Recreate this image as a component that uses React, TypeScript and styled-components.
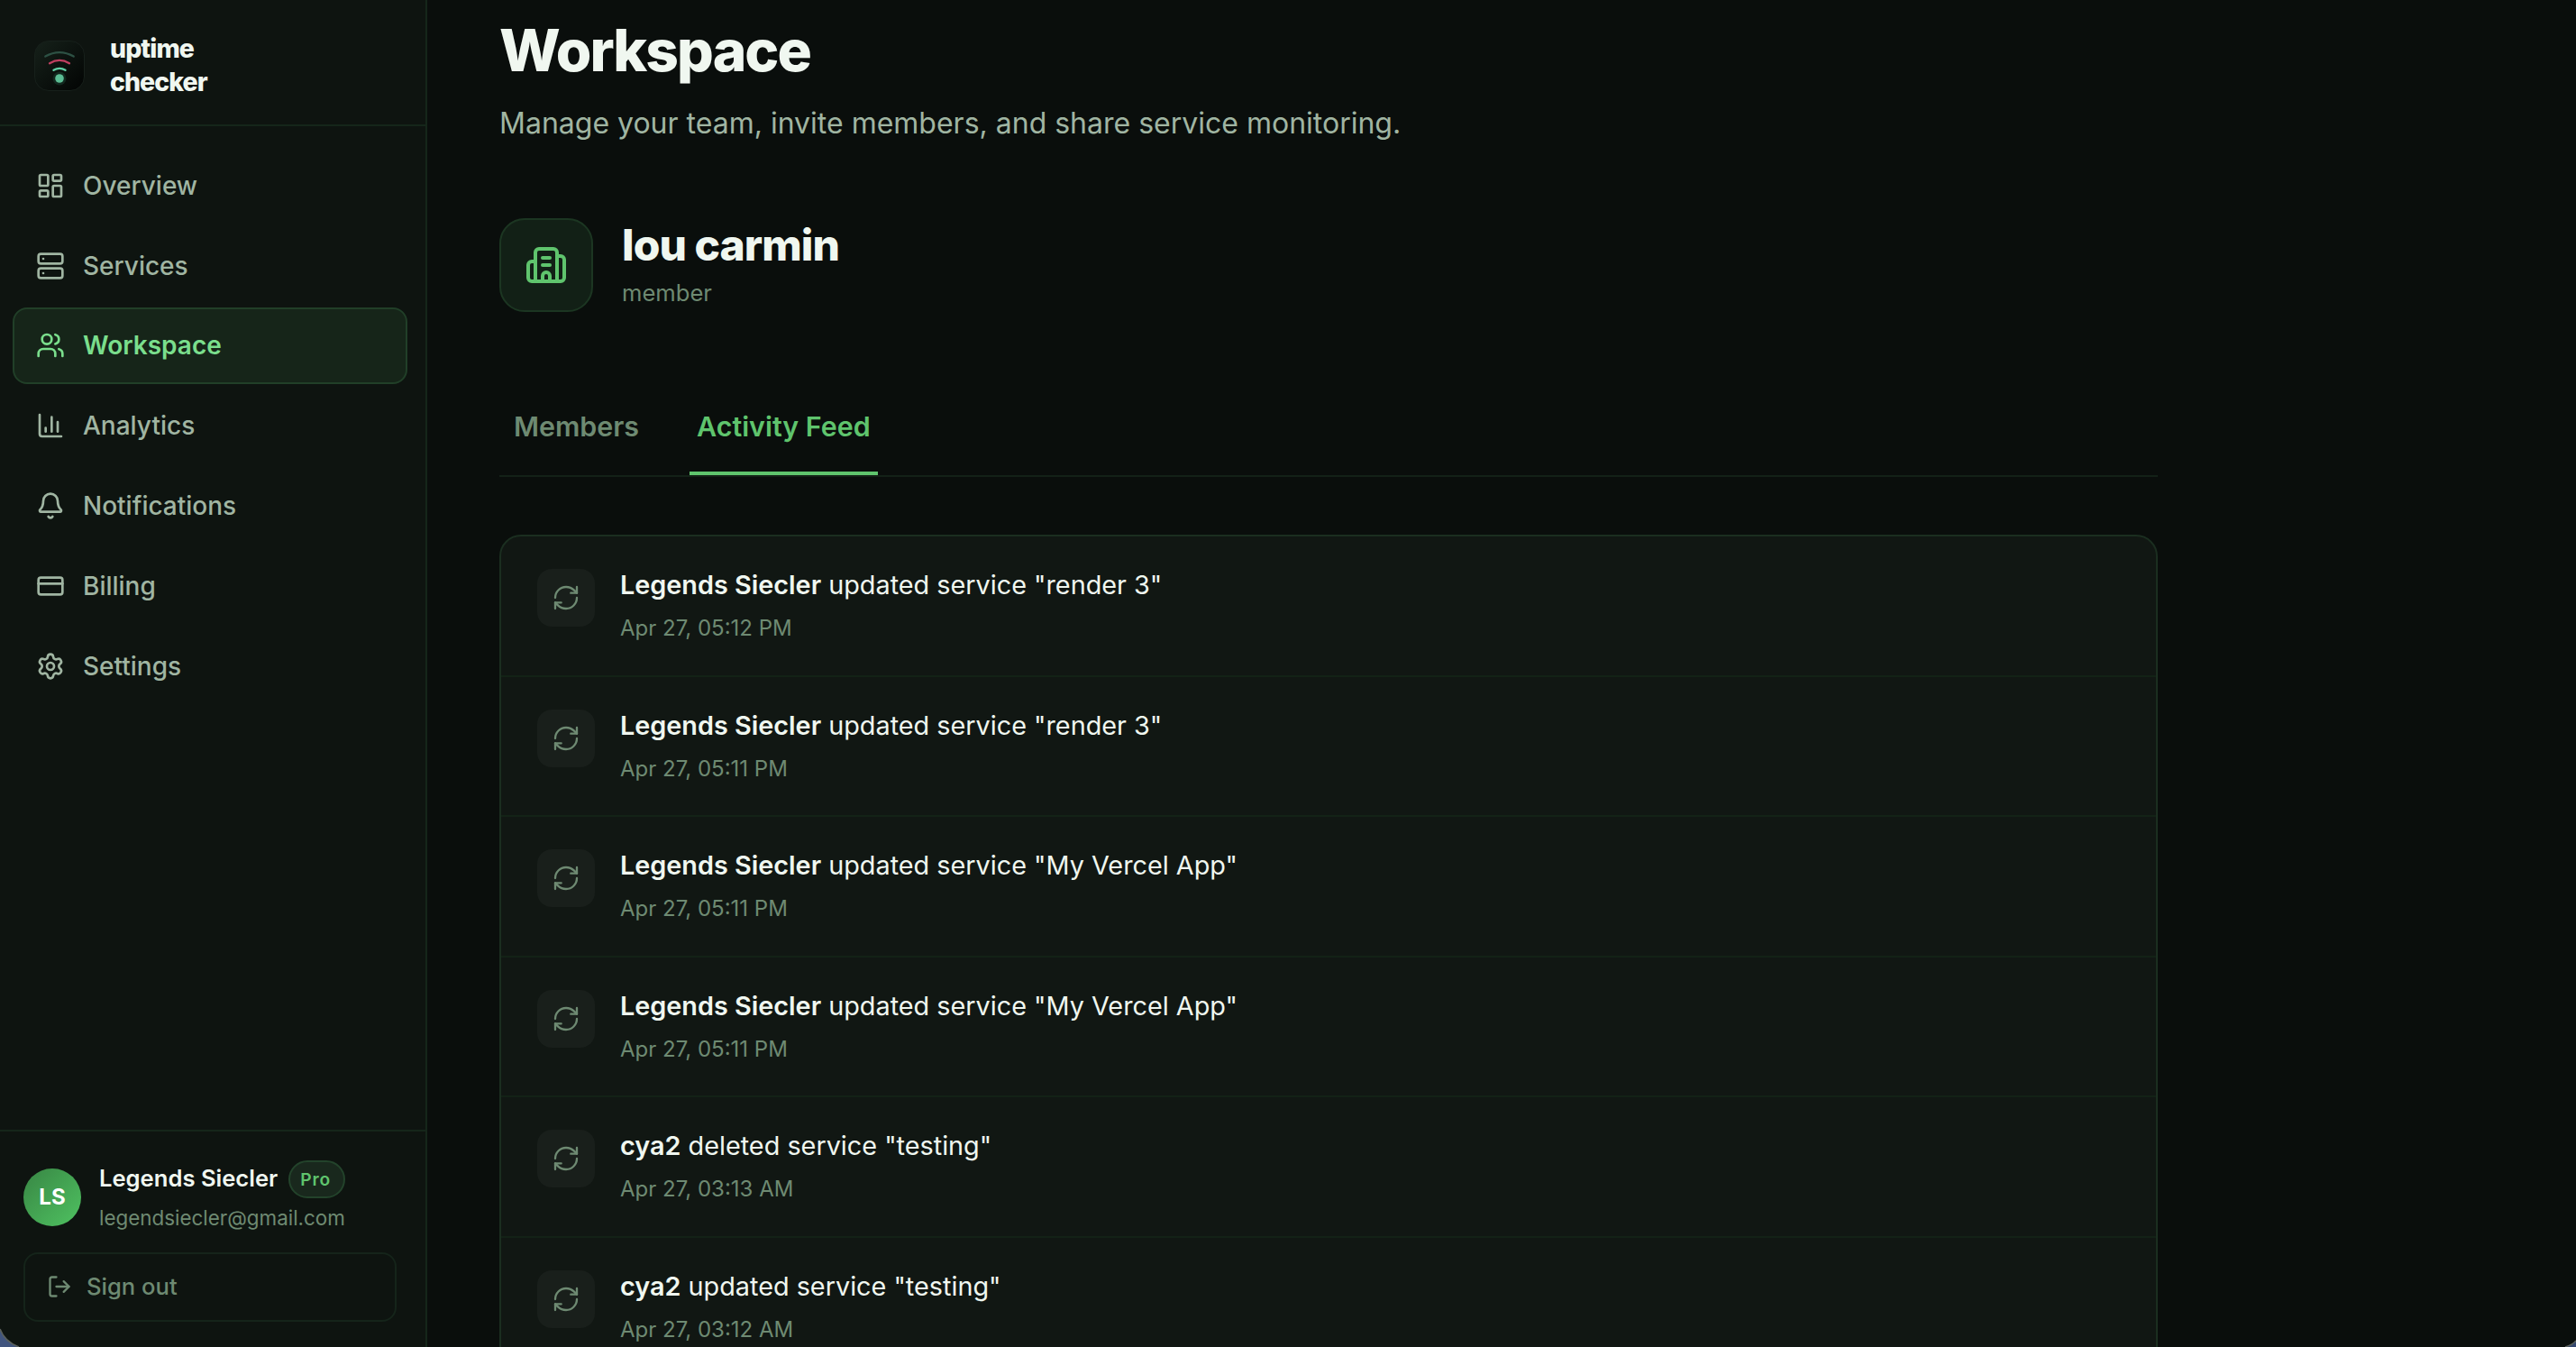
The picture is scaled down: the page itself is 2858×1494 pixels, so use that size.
import React from "react";
import styled, { createGlobalStyle, css } from "styled-components";
import {
  Bell,
  Building2,
  ChartColumn,
  CreditCard,
  LayoutDashboard,
  LogOut,
  RefreshCw,
  Server,
  Settings,
  Users,
  type LucideIcon,
} from "lucide-react";

const color = {
  page: "#0a0e0c",
  sidebar: "#0e1410",
  line: "#15261a",
  text: "#f0f7f0",
  soft: "#a0b5a2",
  muted: "#6e8a72",
  green: "#5fc46d",
  greenLight: "#7ade8c",
};

const GlobalStyle = createGlobalStyle`
  *, *::before, *::after { box-sizing: border-box; }
  html, body { margin: 0; background: ${color.page}; }
  body {
    color: ${color.text};
    font-family: Inter, "Liberation Sans", sans-serif;
    overflow: hidden;
  }
  svg { display: block; flex-shrink: 0; }
`;

const Shell = styled.div`
  position: relative;
  display: grid;
  grid-template: 100% / 474px 1fr;
  height: 1494px;
  overflow: hidden;
`;

const Sidebar = styled.aside`
  display: flex;
  flex-direction: column;
  min-height: 0;
  background: ${color.sidebar};
  border-right: 2px solid ${color.line};
`;

const Brand = styled.div`
  display: flex;
  align-items: flex-start;
  gap: 28px;
  height: 140px;
  padding: 45px 38px 0;
  border-bottom: 2px solid ${color.line};
`;

const BrandName = styled.div`
  width: 120px;
  margin-top: -10px;
  font-size: 28.4px;
  line-height: 37px;
  font-weight: 800;
  letter-spacing: -0.032em;
`;

const Nav = styled.nav`
  display: flex;
  flex: 1;
  flex-direction: column;
  gap: 4px;
  padding: 23.4px 20px 0 14px;
`;

const NavItem = styled.a<{ $active?: boolean }>`
  display: flex;
  align-items: center;
  gap: 20px;
  height: 84.8px;
  padding: 0 24px;
  border: 2px solid transparent;
  border-radius: 16px;
  color: ${color.soft};
  font-size: 28px;
  font-weight: 500;
  ${(p) =>
    p.$active &&
    css`
      color: ${color.greenLight};
      background: #162519;
      border-color: #213f28;
      font-weight: 600;
    `}
`;

const Account = styled.div`
  display: flex;
  flex-direction: column;
  gap: 21px;
  height: 241px;
  padding: 32px 32px 0 26px;
  border-top: 2px solid ${color.line};
`;

const Profile = styled.div`
  display: flex;
  align-items: center;
  gap: 20px;
  height: 81px;
`;

const Avatar = styled.div`
  display: grid;
  place-items: center;
  flex-shrink: 0;
  width: 64px;
  height: 64px;
  margin-top: 1px;
  border-radius: 50%;
  background: linear-gradient(135deg, #388644, #4fc261);
  color: #fff;
  font-size: 24px;
  font-weight: 700;
  line-height: 1;
`;

const ProfileText = styled.div`
  display: flex;
  flex-direction: column;
`;

const ProfileTop = styled.div`
  display: flex;
  align-items: center;
  gap: 11.7px;
  height: 42px;
`;

const ProfileName = styled.span`
  font-size: 25.6px;
  line-height: 38px;
  margin-top: -2px;
  font-weight: 600;
`;

const Badge = styled.span`
  display: flex;
  align-items: center;
  width: 63px;
  height: 42px;
  padding-left: 11.2px;
  border: 2px solid #23432b;
  border-radius: 21px;
  background: #19281d;
  color: ${color.green};
  font-size: 19.2px;
  font-weight: 600;
  letter-spacing: 0.045em;
`;

const Email = styled.span`
  margin-top: 5px;
  color: ${color.muted};
  font-size: 22.4px;
  line-height: 34px;
`;

const SignOut = styled.button`
  display: flex;
  align-items: center;
  gap: 16px;
  height: 77px;
  padding: 0 24px 2px;
  border: 2px solid #15241a;
  border-radius: 16px;
  background: none;
  color: ${color.muted};
  font: 500 25.6px Inter, "Liberation Sans", sans-serif;
`;

const Main = styled.main`
  width: 2000px;
  padding: 20px 80px 0;
`;

const Title = styled.h1`
  margin: 0;
  font-size: 64px;
  line-height: 71px;
  font-weight: 800;
  letter-spacing: -0.03em;
`;

const Subtitle = styled.p`
  margin: 20px 0 0;
  color: ${color.soft};
  font-size: 32px;
  line-height: 51px;
`;

const Team = styled.section`
  display: flex;
  align-items: center;
  gap: 32px;
  margin-top: 80px;
`;

const TeamIcon = styled.div`
  display: grid;
  place-items: center;
  width: 104px;
  height: 104px;
  border: 2px solid #1c3622;
  border-radius: 28px;
  background: #122016;
  color: ${color.green};
`;

const TeamName = styled.h2`
  margin: 0;
  font-size: 48px;
  line-height: 58px;
  font-weight: 800;
  letter-spacing: -0.02em;
`;

const TeamRole = styled.div`
  margin-top: 3px;
  color: ${color.muted};
  font-size: 25.6px;
  line-height: 41px;
`;

const Tabs = styled.div`
  display: flex;
  gap: 32px;
  height: 97px;
  margin-top: 86px;
  border-bottom: 2px solid #132117;
`;

const Tab = styled.div<{ $active?: boolean }>`
  position: relative;
  padding: 17px 16px 0;
  color: ${(p) => (p.$active ? color.green : color.muted)};
  font-size: 30.4px;
  line-height: 49px;
  font-weight: 600;
  ${(p) =>
    p.$active &&
    css`
      &::after {
        content: "";
        position: absolute;
        left: 8px;
        right: 8px;
        bottom: 0;
        height: 4px;
        background: ${color.green};
      }
    `}
`;

const Feed = styled.section`
  margin-top: 64px;
  border: 2px solid #1b2e20;
  border-radius: 24px;
  background: #111713;
`;

const FeedRow = styled.article`
  display: flex;
  gap: 28px;
  height: 155.6px;
  padding: 36px 40px 0;
  border-bottom: 2px solid #132216;
`;

const FeedIcon = styled.div`
  display: grid;
  place-items: center;
  width: 64px;
  height: 64px;
  border-radius: 16px;
  background: #191f1b;
  color: ${color.muted};
`;

const FeedText = styled.div`
  font-size: 28.8px;
  line-height: 35px;
  white-space: pre;

  strong {
    font-weight: 600;
  }
`;

const FeedTime = styled.time`
  display: block;
  margin-top: 16px;
  color: ${color.muted};
  font-size: 24px;
  line-height: 30px;
`;

const Corner = styled.svg<{ $side: "left" | "right" }>`
  position: absolute;
  bottom: 0;
  ${(p) => p.$side}: 0;
`;

const navItems: { label: string; icon: LucideIcon; active?: boolean }[] = [
  { label: "Overview", icon: LayoutDashboard },
  { label: "Services", icon: Server },
  { label: "Workspace", icon: Users, active: true },
  { label: "Analytics", icon: ChartColumn },
  { label: "Notifications", icon: Bell },
  { label: "Billing", icon: CreditCard },
  { label: "Settings", icon: Settings },
];

const activity = [
  { who: "Legends Siecler", what: 'updated service "render 3"', when: "Apr 27, 05:12 PM" },
  { who: "Legends Siecler", what: 'updated service "render 3"', when: "Apr 27, 05:11 PM" },
  { who: "Legends Siecler", what: 'updated service "My Vercel App"', when: "Apr 27, 05:11 PM" },
  { who: "Legends Siecler", what: 'updated service "My Vercel App"', when: "Apr 27, 05:11 PM" },
  { who: "cya2", what: 'deleted service "testing"', when: "Apr 27, 03:13 AM" },
  { who: "cya2", what: 'updated service "testing"', when: "Apr 27, 03:12 AM" },
];

const Logo = () => (
  <svg width="56" height="56" viewBox="0 0 56 56" fill="none">
    <defs>
      <linearGradient id="logoBg" x1="0" y1="0" x2="1" y2="1">
        <stop offset="0" stopColor="#16211a" />
        <stop offset="1" stopColor="#020403" />
      </linearGradient>
    </defs>
    <rect x="0.5" y="0.5" width="55" height="55" rx="15.5" fill="url(#logoBg)" stroke="#17201b" />
    <g strokeWidth="2.3" strokeLinecap="round">
      <path d="M12.3 17.6Q28 8.6 43.7 17.6" stroke="#2d5144" />
      <path d="M17 25.2Q28 18.6 39 25.2" stroke="#c03f60" />
      <path d="M21.5 32.8Q28 28.8 34.5 32.8" stroke="#5fcfa4" />
    </g>
    <circle cx="28" cy="42" r="7.5" fill="#12271e" />
    <circle cx="28" cy="42" r="4.8" fill="#5bbd94" />
  </svg>
);

export default function App() {
  return (
    <>
      <GlobalStyle />
      <Shell>
        <Sidebar>
          <Brand>
            <Logo />
            <BrandName>uptime checker</BrandName>
          </Brand>
          <Nav>
            {navItems.map(({ label, icon: Icon, active }) => (
              <NavItem key={label} $active={active}>
                <Icon size={32} />
                {label}
              </NavItem>
            ))}
          </Nav>
          <Account>
            <Profile>
              <Avatar>LS</Avatar>
              <ProfileText>
                <ProfileTop>
                  <ProfileName>Legends Siecler</ProfileName>
                  <Badge>Pro</Badge>
                </ProfileTop>
                <Email>legendsiecler@gmail.com</Email>
              </ProfileText>
            </Profile>
            <SignOut>
              <LogOut size={28} />
              Sign out
            </SignOut>
          </Account>
        </Sidebar>
        <Main>
          <Title>Workspace</Title>
          <Subtitle>Manage your team, invite members, and share service monitoring.</Subtitle>
          <Team>
            <TeamIcon>
              <Building2 size={48} />
            </TeamIcon>
            <div>
              <TeamName>lou carmin</TeamName>
              <TeamRole>member</TeamRole>
            </div>
          </Team>
          <Tabs>
            <Tab>Members</Tab>
            <Tab $active>Activity Feed</Tab>
          </Tabs>
          <Feed>
            {activity.map((item, i) => (
              <FeedRow key={i}>
                <FeedIcon>
                  <RefreshCw size={32} strokeWidth={1.75} />
                </FeedIcon>
                <div>
                  <FeedText>
                    <strong>{item.who}</strong> {item.what}
                  </FeedText>
                  <FeedTime>{item.when}</FeedTime>
                </div>
              </FeedRow>
            ))}
          </Feed>
        </Main>
        <Corner $side="left" width="24" height="22">
          <path d="M0 2Q5 16 21 22H0Z" fill="#41557f" />
          <path d="M0 2Q5 16 21 22" fill="none" stroke="#5a605c" strokeWidth="1.6" />
        </Corner>
        <Corner $side="right" width="14" height="8">
          <path d="M14 1Q10 6 2 8H14Z" fill="#33466f" />
          <path d="M14 1Q10 6 2 8" fill="none" stroke="#5a605c" strokeWidth="1.5" />
        </Corner>
      </Shell>
    </>
  );
}
